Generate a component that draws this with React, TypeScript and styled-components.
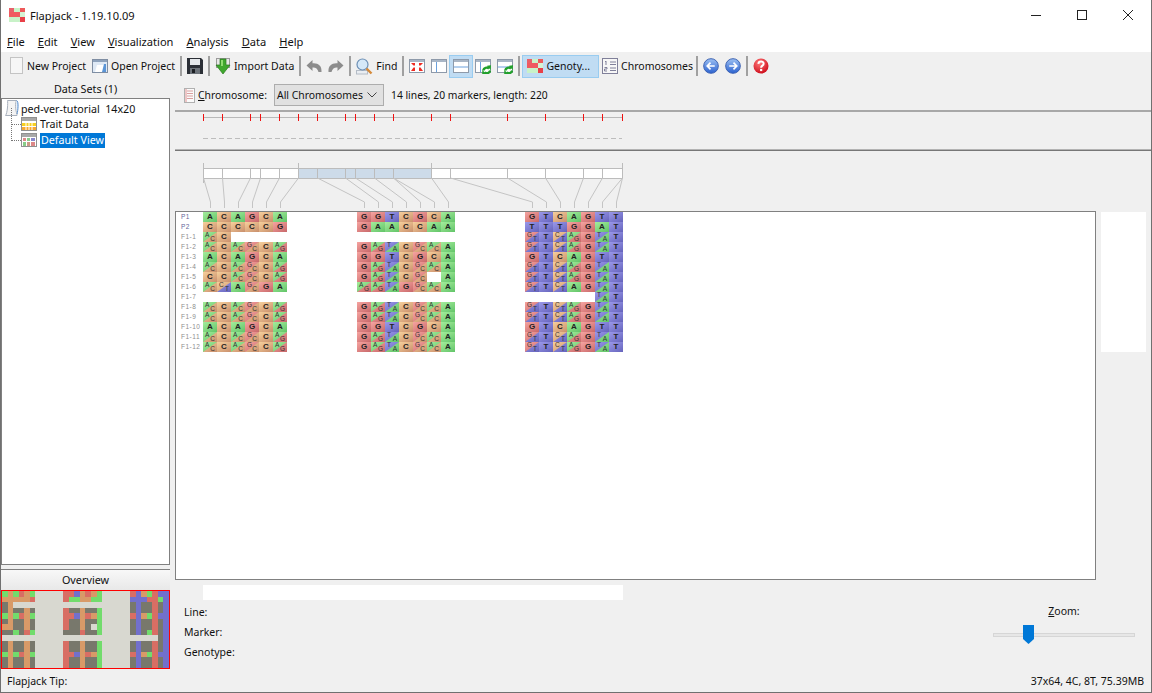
import React from 'react';
import styled, { createGlobalStyle } from 'styled-components';

const GlobalStyle = createGlobalStyle`
  html, body { margin: 0; padding: 0; background: #f0f0f0; }
  * { box-sizing: border-box; }
`;

const Win = styled.div`
  width: 1152px;
  height: 693px;
  display: flex;
  flex-direction: column;
  overflow: hidden;
  background: #f0f0f0;
  color: #111;
  font-family: 'Noto Sans', 'Open Sans', sans-serif;
  font-size: 10.5px;
  border: 1px solid #707070;
  border-top: none;
`;
const TitleBar = styled.div`
  height: 30px;
  flex: none;
  display: flex;
  align-items: center;
  background: #fff;
  padding-left: 8px;
`;
const TitleText = styled.span`
  margin-left: 5px;
  font-size: 11.1px;
  flex: 1;
`;
const WinBtn = styled.div`
  width: 46px;
  height: 30px;
  display: flex;
  align-items: center;
  justify-content: center;
`;
const MenuBar = styled.div`
  height: 22px;
  flex: none;
  display: flex;
  align-items: center;
  background: #fff;
  padding-left: 6px;
  gap: 13px;
  font-size: 11.1px;
`;
const ToolBar = styled.div`
  height: 28px;
  flex: none;
  display: flex;
  align-items: center;
  padding-left: 4px;
`;
const ToolBtn = styled.div<{ $on?: boolean }>`
  height: 23px;
  display: flex;
  align-items: center;
  gap: 3px;
  padding: 0 3px;
  white-space: nowrap;
  font-size: 10.5px;
  border: 1px solid ${p => (p.$on ? '#99ccf0' : 'transparent')};
  background: ${p => (p.$on ? '#c0dcf3' : 'transparent')};
  margin: 0 -1px;
`;
const GenoBtn = styled(ToolBtn)`
  padding: 0 8px 0 4px;
  margin: 0;
`;
const Sep = styled.div`
  width: 2px;
  height: 20px;
  background: #a0a0a0;
  margin: 0 2px;
`;
const TightSep = styled(Sep)`
  margin-left: 0;
`;
const Main = styled.div`
  flex: 1;
  min-height: 0;
  display: flex;
`;
const LeftPane = styled.div`
  width: 169px;
  flex: none;
  display: flex;
  flex-direction: column;
`;
const PaneHead = styled.div`
  height: 18px;
  flex: none;
  display: flex;
  align-items: center;
  justify-content: center;
  font-size: 10.8px;
  padding-bottom: 1px;
`;
const TreeBox = styled.div`
  height: 467px;
  flex: none;
  background: #fff;
  border: 1px solid #808080;
  padding: 2px 0 0 3px;
  position: relative;
`;
const TreeRow = styled.div<{ $child?: boolean }>`
  height: ${p => (p.$child ? '16px' : '15px')};
  display: flex;
  align-items: center;
  gap: ${p => (p.$child ? '3px' : '1px')};
  padding-left: ${p => (p.$child ? '16px' : '0')};
  position: relative;
  font-size: 10.7px;
  white-space: pre;
  &::before {
    content: '';
    display: ${p => (p.$child ? 'block' : 'none')};
    position: absolute;
    left: 6px;
    top: -8px;
    height: 16px;
    width: 9px;
    border-left: 1px dotted #777;
    border-bottom: 1px dotted #777;
  }
`;
const Selected = styled.span`
  background: #0078d7;
  color: #fff;
  padding: 0 1px;
  height: 15px;
  line-height: 15px;
`;
const OverviewHead = styled.div`
  height: 21px;
  flex: none;
  margin-top: 4px;
  padding-bottom: 2px;
  border-top: 1px solid #808080;
  display: flex;
  align-items: center;
  justify-content: center;
  font-size: 10.8px;
  background: linear-gradient(#f8f8f8, #e8e8e8);
`;
const OverviewMap = styled.div`
  height: 79px;
  flex: none;
  border: 1px solid #ff0000;
  display: grid;
  grid-template-columns: repeat(30, 1fr);
  grid-template-rows: repeat(14, 1fr);
`;
const OvCell = styled.div<{ $c: string }>`
  background: ${p => p.$c};
`;
const RightPane = styled.div`
  flex: 1;
  min-width: 0;
  display: flex;
  flex-direction: column;
  margin-left: 5px;
`;
const ChromRow = styled.div`
  height: 30px;
  flex: none;
  display: flex;
  align-items: center;
  padding-left: 9px;
  font-size: 10.4px;
`;
const ChromLabel = styled.span`
  margin-left: 3px;
`;
const SelectBox = styled.div`
  width: 110px;
  height: 22px;
  margin-left: 7px;
  display: flex;
  align-items: center;
  justify-content: space-between;
  padding: 0 6px 0 2px;
  background: #e1e1e1;
  border: 1px solid #adadad;
  white-space: nowrap;
`;
const Summary = styled.span`
  margin-left: 7px;
  font-size: 10.3px;
`;
const Drawing = styled.svg`
  display: block;
  flex: none;
`;
const CanvasRow = styled.div`
  height: 369px;
  flex: none;
  display: flex;
  align-items: flex-start;
`;
const Canvas = styled.div`
  width: 921px;
  height: 369px;
  flex: none;
  background: #fff;
  border: 1px solid #808080;
  display: flex;
`;
const LabelCol = styled.div`
  width: 27px;
  flex: none;
  display: flex;
  flex-direction: column;
`;
const RowLabel = styled.div<{ $parent: boolean }>`
  height: 10px;
  line-height: 10px;
  padding-left: 5px;
  font-family: 'Liberation Sans', sans-serif;
  font-size: 6.5px;
  letter-spacing: 0.5px;
  color: ${p => (p.$parent ? '#66669a' : '#8d8d8d')};
`;
const GenoGrid = styled.div`
  display: grid;
  grid-template-columns: repeat(30, 14px);
  grid-auto-rows: 10px;
`;
const Cell = styled.div<{ $base: string }>`
  position: relative;
  overflow: hidden;
  background: ${p => baseFill[p.$base] || 'transparent'};
  display: flex;
  align-items: center;
  justify-content: center;
  font-family: 'Liberation Sans', sans-serif;
  font-weight: bold;
  font-size: 8px;
  line-height: 10px;
  color: #222;
`;
const LowerHalf = styled.div<{ $base: string }>`
  position: absolute;
  inset: 0;
  background: ${p => baseFill[p.$base]};
  clip-path: polygon(100% 0, 100% 100%, 0 100%);
`;
const HetLetter = styled.span<{ $low?: boolean }>`
  position: absolute;
  font-size: 6.5px;
  line-height: 6px;
  font-weight: normal;
  color: #333;
  ${p => (p.$low ? 'right: 2px; bottom: 0;' : 'left: 2px; top: 0;')}
`;
const SideBox = styled.div`
  width: 45px;
  height: 140px;
  margin: 1px 0 0 5px;
  background: #fff;
  flex: none;
`;
const Bottom = styled.div`
  flex: 1;
  min-height: 0;
  display: flex;
  position: relative;
`;
const InfoCol = styled.div`
  width: 818px;
  flex: none;
  display: flex;
  flex-direction: column;
  padding: 5px 0 0 9px;
`;
const Strip = styled.div`
  width: 420px;
  height: 15px;
  margin-left: 19px;
  background: #fff;
  margin-bottom: 2px;
`;
const InfoLine = styled.div`
  height: 20px;
  line-height: 20px;
  font-size: 10.5px;
`;
const ZoomCol = styled.div`
  width: 142px;
  padding-top: 23px;
  display: flex;
  flex-direction: column;
  align-items: center;
  font-size: 10.5px;
`;
const ZoomLabel = styled.div`
  height: 16px;
  line-height: 16px;
`;
const Track = styled.div`
  width: 142px;
  height: 4px;
  margin-top: 14px;
  background: #e7e7e7;
  border: 1px solid #d6d6d6;
  position: relative;
`;
const Thumb = styled.svg`
  position: absolute;
  left: 29px;
  top: -9px;
`;
const StatusBar = styled.div`
  height: 20px;
  flex: none;
  display: flex;
  align-items: center;
  justify-content: space-between;
  padding: 0 7px 2px 6px;
  font-size: 10.5px;
`;

const baseFill: Record<string, string> = {
  A: 'linear-gradient(150deg, #a4ec9c, #62c468)',
  C: 'linear-gradient(150deg, #f6d09c, #c98f6c)',
  G: 'linear-gradient(150deg, #f6a4a0, #c8686a)',
  T: 'linear-gradient(150deg, #9a98ea, #6664bc)',
};
const flatFill: Record<string, string> = { A: '#72dc6c', C: '#d89a68', G: '#d86e64', T: '#7270cc' };

const blank6 = '. . . . . .';
const blank7 = '. . . . . . .';
const g1 = 'A C A G C A';
const g1h = 'AC C AC GC C AG';
const g2 = 'G G T C G C A';
const g2h = 'G AG TA C GC AC A';
const g3 = 'G T C A G T T';
const g3h = 'GT T CT AG G TA T';

// label, then the three marker blocks
const rows: [string, string, string, string][] = [
  ['P1', g1, g2, g3],
  ['P2', 'C C C C C G', 'G A A C C A A', 'T T T G G A T'],
  ['F1-1', 'AC C . . . .', blank7, g3h],
  ['F1-2', g1h, g2h, g3h],
  ['F1-3', g1, g2, g3],
  ['F1-4', g1h, g2h, g3h],
  ['F1-5', 'C C AC GC C AG', 'G AG TA C GC . A', g3h],
  ['F1-6', 'AC CT A GC G A', 'AG AG TA G GC AC A', 'GT T CT A G TA T'],
  ['F1-7', blank6, blank7, '. . . . . TA T'],
  ['F1-8', g1h, g2h, g3h],
  ['F1-9', g1h, g2h, g3h],
  ['F1-10', g1, g2, g3],
  ['F1-11', g1h, g2h, g3h],
  ['F1-12', g1h, g2h, g3h],
];
const gap = ['.', '.', '.', '.', '.'];
const matrix = rows.map(r => [...r[1].split(' '), ...gap, ...r[2].split(' '), ...gap, ...r[3].split(' ')]);

const ticks = [203, 222, 250, 260, 279, 298, 317, 345, 355, 374, 393, 431, 450, 507, 545, 583, 602, 622];
const colCentres = [
  210, 224, 238, 252, 266, 280, 364, 378, 392, 406, 420, 434, 448, 532, 546, 560, 574, 588, 602, 616,
];
// links from the chromosome bar ticks down to the 20 marker columns
const linkFrom = [203, 222, 250, 260, 279, 298, 317, 345, 355, 374, 393, 393, 431, 450, 507, 545, 583, 602, 622, 622];

const AppIcon = ({ size = 16 }: { size?: number }) => (
  <svg width={size} height={size * 0.875} viewBox="0 0 16 14">
    <rect width="5" height="4" fill="#e8606a" />
    <rect x="5" width="6" height="4" fill="#c8f4c8" />
    <rect x="11" width="5" height="4" fill="#ee5a5a" />
    <rect y="4" width="11" height="5" fill="#f05a60" />
    <rect x="11" y="4" width="5" height="5" fill="#d4f4d4" />
    <rect y="9" width="11" height="5" fill="#c8f2c8" />
    <rect x="11" y="9" width="5" height="5" fill="#e84048" />
  </svg>
);
const NewIcon = () => (
  <svg width="16" height="18" viewBox="0 0 16 18">
    <rect x="2.5" y="0.5" width="12" height="16" fill="#f6f6f6" stroke="#c4c4c4" />
  </svg>
);
const OpenIcon = () => (
  <svg width="16" height="16" viewBox="0 0 16 16">
    <rect x="0.5" y="1.5" width="15" height="13" fill="#dfe9f5" stroke="#7f8ea3" />
    <rect x="1" y="2" width="14" height="2" fill="#8ea2bc" />
    <path d="M3 14 L5 7 H14 V14 Z" fill="#fff" />
    <path d="M10 14 L12 6 H14 V14 Z" fill="#5b95d6" />
  </svg>
);
const SaveIcon = () => (
  <svg width="16" height="16" viewBox="0 0 16 16">
    <path d="M0 0 H14 L16 2 V16 H0 Z" fill="#2b2f36" />
    <rect x="3" y="1" width="10" height="6" fill="#e4e7ea" />
    <rect x="3" y="10" width="10" height="6" fill="#6d737a" />
    <rect x="5" y="11" width="3" height="4" fill="#1c1f24" />
  </svg>
);
const ImportIcon = () => (
  <svg width="16" height="17" viewBox="0 0 16 17">
    <rect x="1.5" y="0.5" width="13" height="9" fill="#e8e8e8" stroke="#9a9a9a" />
    <path d="M5 1 H11 V7 H15 L8 16 L1 7 H5 Z" fill="#3fa82e" stroke="#2b7a20" strokeWidth="0.7" />
    <path d="M6 2 H8 V8 H6 Z" fill="#8fdc70" />
  </svg>
);
const UndoIcon = ({ flip }: { flip?: boolean }) => (
  <svg width="16" height="14" viewBox="0 0 16 14" style={flip ? { transform: 'scaleX(-1)' } : undefined}>
    <path d="M6.5 1 L0.5 6.5 L6.5 12 V8.5 C9.5 8.2 11.5 9.5 12.5 13 H15.5 C16 6.5 12 3.8 6.5 4.3 Z" fill="#8c8c8c" />
  </svg>
);
const FindIcon = () => (
  <svg width="17" height="17" viewBox="0 0 17 17">
    <rect x="0.5" y="12.5" width="11" height="3.5" fill="#e9edf2" stroke="#b4bcc6" />
    <circle cx="6.5" cy="6.5" r="5.5" fill="#d5e8f8" stroke="#6c8fb5" strokeWidth="1.2" />
    <path d="M10.5 10.5 L15.5 15.5" stroke="#d58a3a" strokeWidth="2.4" />
  </svg>
);
const PanelBase = ({ children }: { children?: React.ReactNode }) => (
  <svg width="16" height="16" viewBox="0 0 16 16">
    <rect x="0.5" y="1.5" width="15" height="13" fill="#fff" stroke="#8e9aaa" />
    <rect x="1" y="2" width="14" height="2" fill="#a9b6c6" />
    {children}
  </svg>
);
const FitIcon = () => (
  <PanelBase>
    <path d="M2 5 H6 V7.5 H4.5 L2 5 Z M14 5 H10 V7.5 H11.5 Z M2 13 H6 V9.5 H4.5 Z M14 13 H10 V9.5 H11.5 Z" fill="#ee2b22" />
  </PanelBase>
);
const Refresh = () => (
  <g fill="none" stroke="#22a02c" strokeWidth="2.4">
    <path d="M8.2 12.5 A3.6 3.6 0 0 1 14 10.5" />
    <path d="M15.2 12.5 A3.6 3.6 0 0 1 9.6 14.6" />
    <path d="M12.2 8 L16 7.5 L15.6 11.6 Z" fill="#22a02c" strokeWidth="0.5" />
    <path d="M11 16 L7.4 16 L7.6 12.4 Z" fill="#22a02c" strokeWidth="0.5" />
  </g>
);
const VertIcon = ({ refresh }: { refresh?: boolean }) => (
  <PanelBase>
    <path d="M5.5 4 V14" stroke="#6aa0dc" />
    {refresh && <Refresh />}
  </PanelBase>
);
const HorzIcon = ({ refresh }: { refresh?: boolean }) => (
  <PanelBase>
    <path d="M1 9 H15" stroke="#6aa0dc" />
    {refresh && <Refresh />}
  </PanelBase>
);
const ChromIcon = () => (
  <svg width="16" height="16" viewBox="0 0 16 16">
    <rect x="0.5" y="0.5" width="15" height="15" fill="#f7f7f7" stroke="#80809a" />
    <path d="M4 3 V7 M3 4 L4 3 M8 4 H14 M8 6.5 H14 M2.5 9.5 H5 V11 H2.5 V13 H5 M8 10 H14 M8 12.5 H14" stroke="#80809a" fill="none" />
  </svg>
);
const NavIcon = ({ back }: { back?: boolean }) => (
  <svg width="16" height="16" viewBox="0 0 17 17">
    <defs>
      <linearGradient id="navg" x1="0" y1="0" x2="0" y2="1">
        <stop offset="0" stopColor="#9cc0f2" />
        <stop offset="1" stopColor="#2c62d0" />
      </linearGradient>
    </defs>
    <circle cx="8.5" cy="8.5" r="7.8" fill="url(#navg)" stroke="#3a5fb0" />
    <path
      d={back ? 'M12.5 8.5 H5 M8 5 L4.5 8.5 L8 12' : 'M4.5 8.5 H12 M9 5 L12.5 8.5 L9 12'}
      stroke="#fff"
      strokeWidth="1.8"
      fill="none"
    />
  </svg>
);
const HelpIcon = () => (
  <svg width="16" height="16" viewBox="0 0 17 17">
    <defs>
      <radialGradient id="helpg" cx="0.4" cy="0.3" r="0.8">
        <stop offset="0" stopColor="#ff7a7a" />
        <stop offset="1" stopColor="#c80010" />
      </radialGradient>
    </defs>
    <circle cx="8.5" cy="8.5" r="8" fill="url(#helpg)" />
    <path d="M5.7 6.2 C5.9 2.8 11.3 2.9 11.3 6 C11.3 8.2 8.6 8 8.6 10.3" stroke="#fff" strokeWidth="2.1" fill="none" />
    <rect x="7.5" y="11.6" width="2.3" height="2.3" fill="#fff" />
  </svg>
);
const FileIcon = () => (
  <svg width="15" height="17" viewBox="0 0 15 17">
    <path d="M2.5 0.5 H11.5 C10 2 10.5 11 12 14 V15.5 H0.5 C2.5 13 3 3 2.5 0.5 Z" fill="#f4f4f4" stroke="#a8b0bc" />
    <path d="M11.5 0.5 C14 1 13 11 12 14" fill="#cfe2f6" stroke="#5d90cc" />
  </svg>
);
const TableIcon = ({ trait }: { trait?: boolean }) => (
  <svg width="16" height="15" viewBox="0 0 16 15">
    <rect x="0.5" y="0.5" width="15" height="13" fill="#fff" stroke="#909090" />
    <rect x="1" y="1" width="14" height="3" fill="#a8a8a8" />
    {trait ? (
      <>
        <rect x="1" y="6" width="14" height="3" fill="#f8d020" />
        <rect x="1" y="10" width="14" height="3" fill="#f8a830" />
        <path d="M5 4 V13 M8 4 V13 M11 4 V13" stroke="#fff" />
      </>
    ) : (
      <>
        <rect x="2" y="5" width="3" height="3" fill="#d88" />
        <rect x="6" y="5" width="3" height="3" fill="#8c8" />
        <rect x="10" y="5" width="4" height="3" fill="#88c" />
        <rect x="2" y="9" width="3" height="4" fill="#8c8" />
        <rect x="6" y="9" width="3" height="4" fill="#c98" />
        <rect x="10" y="9" width="4" height="4" fill="#d88" />
      </>
    )}
  </svg>
);
const SheetIcon = () => (
  <svg width="11" height="15" viewBox="0 0 11 15">
    <rect x="0.5" y="0.5" width="10" height="14" fill="#fbfbfb" stroke="#b0b0b0" />
    <path d="M3 3 H9 M3 5.5 H9 M3 8 H9 M3 10.5 H9" stroke="#d9a0a0" />
    <path d="M2 1 V14" stroke="#e09090" />
  </svg>
);

function MapStrip() {
  return (
    <Drawing width="977" height="41" viewBox="175 110 977 41">
      <path d="M175 111 H1152" stroke="#a8a8a8" strokeWidth="2" />
      <path d="M175 150.5 H1152" stroke="#777" strokeWidth="2" />
      <path d="M203 117.5 H622" stroke="#b8b8b8" />
      {ticks.map(x => (
        <path key={x} d={`M${x + 0.5} 114 V121`} stroke="#f01010" />
      ))}
      <path d="M203 138.5 H622" stroke="#bdbdbd" strokeDasharray="5 3" />
    </Drawing>
  );
}

function LinkStrip() {
  return (
    <Drawing width="977" height="60" viewBox="175 151 977 60">
      <rect x="203.5" y="168.5" width="95" height="10" fill="#fff" />
      <rect x="298.5" y="168.5" width="133" height="10" fill="#cddbe9" />
      <rect x="431.5" y="168.5" width="191" height="10" fill="#fff" />
      <rect x="203.5" y="168.5" width="419" height="10" fill="none" stroke="#bcbcbc" />
      {ticks.map(x => (
        <path key={x} d={`M${x + 0.5} 168 V178`} stroke="#bcbcbc" />
      ))}
      <path d="M203.5 163 V183 M298.5 163 V168 M431.5 163 V168 M622.5 163 V168" stroke="#bcbcbc" />
      {colCentres.map((c, i) => (
        <path key={c} d={`M${linkFrom[i] + 0.5} 178 L${c + 0.5} 202 V208`} stroke="#c4c4c4" fill="none" />
      ))}
    </Drawing>
  );
}

function GenoCell({ value }: { value: string }) {
  if (value === '.') return <Cell $base="" />;
  if (value.length === 1) return <Cell $base={value}>{value}</Cell>;
  return (
    <Cell $base={value[0]}>
      <LowerHalf $base={value[1]} />
      <HetLetter>{value[0]}</HetLetter>
      <HetLetter $low>{value[1]}</HetLetter>
    </Cell>
  );
}

const menus = ['File', 'Edit', 'View', 'Visualization', 'Analysis', 'Data', 'Help'];

export default function App() {
  return (
    <Win>
      <GlobalStyle />
      <TitleBar>
        <AppIcon />
        <TitleText>Flapjack - 1.19.10.09</TitleText>
        <WinBtn>
          <svg width="10" height="10"><path d="M0 5.5 H10" stroke="#222" /></svg>
        </WinBtn>
        <WinBtn>
          <svg width="10" height="10"><rect x="0.5" y="0.5" width="9" height="9" fill="none" stroke="#222" /></svg>
        </WinBtn>
        <WinBtn>
          <svg width="10" height="10"><path d="M0 0 L10 10 M10 0 L0 10" stroke="#222" /></svg>
        </WinBtn>
      </TitleBar>
      <MenuBar>
        {menus.map(m => (
          <span key={m}>
            <u>{m[0]}</u>
            {m.slice(1)}
          </span>
        ))}
      </MenuBar>
      <ToolBar>
        <ToolBtn><NewIcon />New Project</ToolBtn>
        <ToolBtn><OpenIcon />Open Project</ToolBtn>
        <Sep />
        <ToolBtn><SaveIcon /></ToolBtn>
        <Sep />
        <ToolBtn><ImportIcon />Import Data</ToolBtn>
        <Sep />
        <ToolBtn><UndoIcon /></ToolBtn>
        <ToolBtn><UndoIcon flip /></ToolBtn>
        <Sep />
        <ToolBtn><FindIcon />Find</ToolBtn>
        <Sep />
        <ToolBtn><FitIcon /></ToolBtn>
        <ToolBtn><VertIcon /></ToolBtn>
        <ToolBtn $on><HorzIcon /></ToolBtn>
        <ToolBtn><VertIcon refresh /></ToolBtn>
        <ToolBtn><HorzIcon refresh /></ToolBtn>
        <Sep />
        <GenoBtn $on><AppIcon />Genoty...</GenoBtn>
        <ToolBtn><ChromIcon />Chromosomes</ToolBtn>
        <TightSep />
        <ToolBtn><NavIcon back /></ToolBtn>
        <ToolBtn><NavIcon /></ToolBtn>
        <Sep />
        <ToolBtn><HelpIcon /></ToolBtn>
      </ToolBar>
      <Main>
        <LeftPane>
          <PaneHead>Data Sets (1)</PaneHead>
          <TreeBox>
            <TreeRow><FileIcon />{'ped-ver-tutorial  14x20'}</TreeRow>
            <TreeRow $child><TableIcon trait />Trait Data</TreeRow>
            <TreeRow $child><TableIcon /><Selected>Default View</Selected></TreeRow>
          </TreeBox>
          <OverviewHead>Overview</OverviewHead>
          <OverviewMap>
            {matrix.flat().map((v, i) => (
              <OvCell key={i} $c={v === '.' ? '#d8d8d0' : v.length > 1 ? '#78786c' : flatFill[v]} />
            ))}
          </OverviewMap>
        </LeftPane>
        <RightPane>
          <ChromRow>
            <SheetIcon />
            <ChromLabel><u>C</u>hromosome:</ChromLabel>
            <SelectBox>
              All Chromosomes
              <svg width="10" height="6"><path d="M0.5 0.5 L5 5 L9.5 0.5" stroke="#444" fill="none" /></svg>
            </SelectBox>
            <Summary>14 lines, 20 markers, length: 220</Summary>
          </ChromRow>
          <MapStrip />
          <LinkStrip />
          <CanvasRow>
            <Canvas>
              <LabelCol>
                {rows.map(r => (
                  <RowLabel key={r[0]} $parent={r[0].startsWith('P')}>{r[0]}</RowLabel>
                ))}
              </LabelCol>
              <GenoGrid>
                {matrix.flat().map((v, i) => (
                  <GenoCell key={i} value={v} />
                ))}
              </GenoGrid>
            </Canvas>
            <SideBox />
          </CanvasRow>
          <Bottom>
            <InfoCol>
              <Strip />
              <InfoLine>Line:</InfoLine>
              <InfoLine>Marker:</InfoLine>
              <InfoLine>Genotype:</InfoLine>
            </InfoCol>
            <ZoomCol>
              <ZoomLabel><u>Z</u>oom:</ZoomLabel>
              <Track>
                <Thumb width="11" height="19" viewBox="0 0 11 19">
                  <path d="M0 0 H11 V14 L5.5 19 L0 14 Z" fill="#0078d7" />
                </Thumb>
              </Track>
            </ZoomCol>
          </Bottom>
        </RightPane>
      </Main>
      <StatusBar>
        <span>Flapjack Tip:</span>
        <span>37x64, 4C, 8T, 75.39MB</span>
      </StatusBar>
    </Win>
  );
}
